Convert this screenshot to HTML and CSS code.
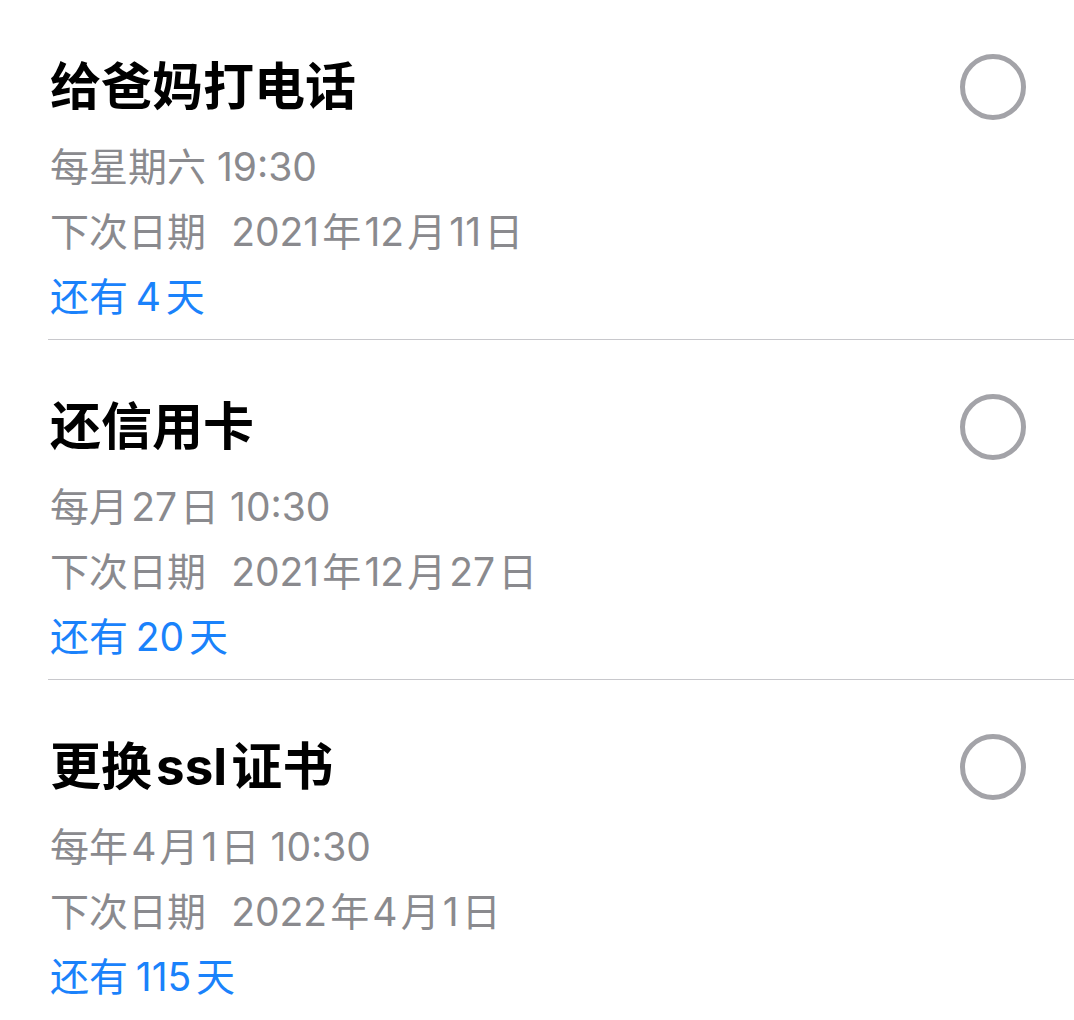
FILE: index.html
```html
<!DOCTYPE html>
<html lang="zh-CN">
<head>
    <meta charset="UTF-8">
    <meta name="viewport" content="width=device-width, initial-scale=1.0">
    <title>提醒事项</title>
    <link rel="stylesheet" href="styles.css">
</head>
<body>
    <ul class="lista">
        <li class="item">
            <div class="info">
                <div class="titulo">给爸妈打电话</div>
                <div class="linea">每星期六 19:30</div>
                <div class="linea">下次日期<span class="fecha"><span class="n">2021</span>年<span class="n">12</span>月<span class="n">11</span>日</span></div>
                <div class="linea azul">还有<span class="n ancho">4</span>天</div>
            </div>
            <span class="check"></span>
        </li>
        <li class="item">
            <div class="info">
                <div class="titulo">还信用卡</div>
                <div class="linea">每月<span class="n">27</span>日 10:30</div>
                <div class="linea">下次日期<span class="fecha"><span class="n">2021</span>年<span class="n">12</span>月<span class="n">27</span>日</span></div>
                <div class="linea azul">还有<span class="n ancho">20</span>天</div>
            </div>
            <span class="check"></span>
        </li>
        <li class="item">
            <div class="info">
                <div class="titulo">更换<span class="n">ssl</span>证书</div>
                <div class="linea">每年<span class="n">4</span>月<span class="n">1</span>日 10:30</div>
                <div class="linea">下次日期<span class="fecha"><span class="n">2022</span>年<span class="n">4</span>月<span class="n">1</span>日</span></div>
                <div class="linea azul">还有<span class="n ancho">115</span>天</div>
            </div>
            <span class="check"></span>
        </li>
    </ul>
</body>
</html>
```

FILE: styles.css
```css
body {
    margin: 0;
    background: #fff;
    font-family: "Inter", "Noto Sans CJK SC", sans-serif;
}
.lista {
    list-style: none;
    margin: 0 0 0 48px;
    padding: 0;
}
.item {
    display: flex;
    justify-content: space-between;
    align-items: flex-start;
    padding: 57px 48px 10px 2px;
    border-bottom: 1px solid #c8c8cc;
}
.item:last-child {
    border-bottom: none;
}
.titulo {
    font-size: 51px;
    font-weight: bold;
    line-height: 60px;
    color: #000;
    margin-bottom: 17px;
}
.linea {
    font-size: 39px;
    line-height: 65px;
    color: #8a8a8e;
}
.n {
    margin: 0 0.08em;
}
.ancho {
    margin: 0 0.12em 0 0.2em;
}
.fecha {
    margin-left: 22px;
}
.azul {
    color: #1a82fb;
}
.check {
    width: 56px;
    height: 56px;
    border: 5px solid #a3a3a8;
    border-radius: 50%;
    margin-top: -3px;
}
```
